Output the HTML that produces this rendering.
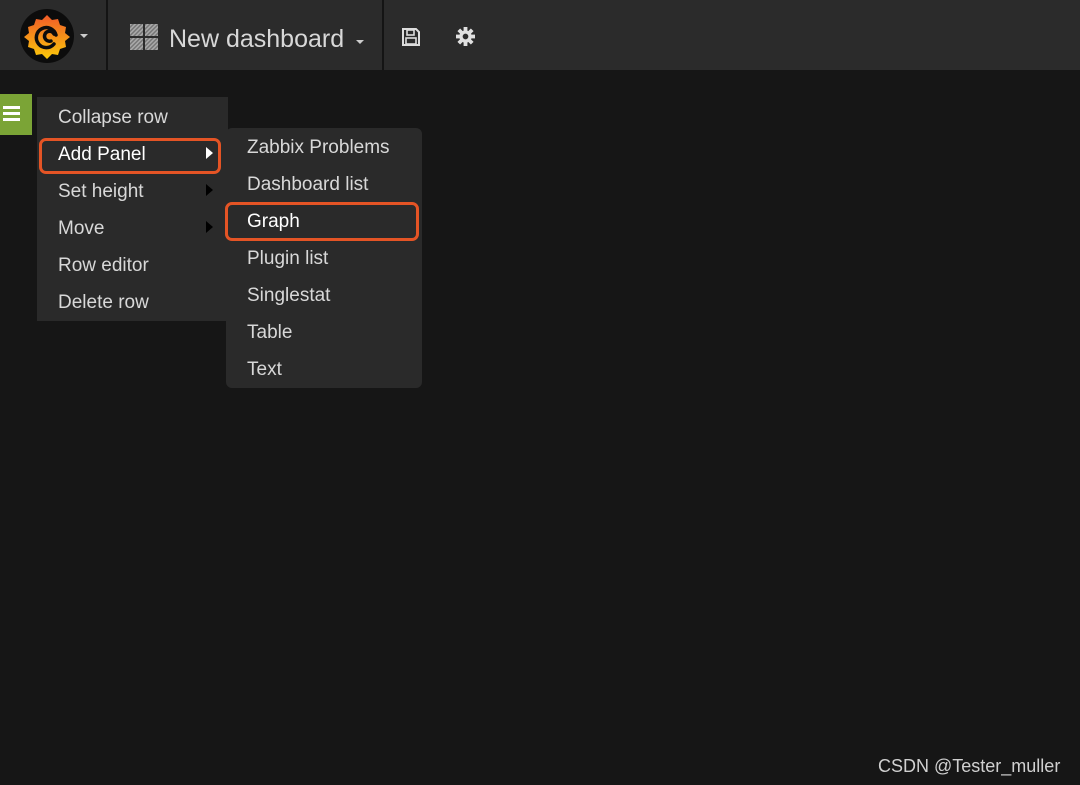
<!DOCTYPE html>
<html><head><style>
*{margin:0;padding:0;box-sizing:border-box}
body{width:1080px;height:785px;background:#161616;font-family:"Liberation Sans",Arial,sans-serif;position:relative;overflow:hidden;color:#d8d8d8}
.hdr{position:absolute;left:0;top:0;width:1080px;height:70px;background:#2b2b2b}
.div{position:absolute;top:0;width:2px;height:70px;background:#141414}
.abs{position:absolute}
.menu{position:absolute;background:#2a2a2a}
.it{position:absolute;font-size:19px;line-height:22px;white-space:nowrap}
.box{position:absolute;border:3px solid #e45425;border-radius:7px}
.tri{position:absolute;width:0;height:0;border-top:6px solid transparent;border-bottom:6px solid transparent;border-left:7px solid #000}
</style></head><body>
<div class="hdr"></div>
<div class="div" style="left:106px"></div>
<div class="div" style="left:382px"></div>
<svg class="abs" style="left:18px;top:8px" width="58" height="56" viewBox="0 0 58 56">
<circle cx="29" cy="28" r="27" fill="#0c0c0c"/>
<defs><linearGradient id="g" x1="0" y1="1" x2="0" y2="0"><stop offset="0" stop-color="#fbca0a"/><stop offset="1" stop-color="#f05a28"/></linearGradient></defs>
<path d="M29 7 l5 5 6-1 2 6 6 2-1 6 5 4-5 4 1 6-6 2-2 6-6-1-5 5-5-5-6 1-2-6-6-2 1-6-5-4 5-4-1-6 6-2 2-6 6 1z" fill="url(#g)"/>
<path d="M33 33 a5 5 0 1 1 3-7 M38 27 a10 10 0 1 0 -2 9" fill="none" stroke="#0c0c0c" stroke-width="3.5" stroke-linecap="round"/>
</svg>
<div class="abs" style="left:80px;top:34px;border-left:4px solid transparent;border-right:4px solid transparent;border-top:4px solid #ccc"></div>
<svg class="abs" style="left:130px;top:24px" width="29" height="27">
<defs><pattern id="h" width="3" height="3" patternUnits="userSpaceOnUse" patternTransform="rotate(45)"><rect width="1.5" height="3" fill="#aaa"/><rect x="1.5" width="1.5" height="3" fill="#777"/></pattern></defs>
<rect x="0" y="0" width="13" height="12" fill="url(#h)"/><rect x="15" y="0" width="13" height="12" fill="url(#h)"/>
<rect x="0" y="14" width="13" height="12" fill="url(#h)"/><rect x="15" y="14" width="13" height="12" fill="url(#h)"/>
</svg>
<div class="it" style="left:169px;top:25px;font-size:25px;line-height:28px;color:#d8d8d8">New dashboard</div>
<div class="abs" style="left:356px;top:40px;border-left:4px solid transparent;border-right:4px solid transparent;border-top:4px solid #ccc"></div>
<svg class="abs" style="left:401px;top:27px" width="20" height="20" viewBox="0 0 20 20"><path d="M2 2h13l3 3v13H2z" fill="none" stroke="#ddd" stroke-width="2"/><rect x="6" y="3" width="7" height="5" fill="none" stroke="#ddd" stroke-width="1.6"/><rect x="5" y="11" width="10" height="6" fill="none" stroke="#ddd" stroke-width="1.6"/></svg>
<svg class="abs" style="left:456px;top:27px" width="19" height="19" viewBox="0 0 20 20"><g fill="#e0e0e0"><circle cx="10" cy="10" r="6.5"/><g><rect x="8" y="0" width="4" height="20"/><rect x="0" y="8" width="20" height="4"/><rect x="8" y="0" width="4" height="20" transform="rotate(45 10 10)"/><rect x="8" y="0" width="4" height="20" transform="rotate(-45 10 10)"/></g></g><circle cx="10" cy="10" r="3" fill="#2b2b2b"/></svg>

<div class="abs" style="left:0;top:94px;width:32px;height:41px;background:#7ba436"></div>
<div class="abs" style="left:3px;top:106px;width:17px;height:3px;background:#fff;box-shadow:0 6px 0 #fff,0 12px 0 #fff"></div>

<div class="menu" style="left:37px;top:97px;width:191px;height:224px"></div>
<div class="menu" style="left:226px;top:128px;width:196px;height:260px;border-radius:6px"></div>

<div class="it" style="left:58px;top:107px">Collapse row</div>
<div class="it" style="left:58px;top:144px;color:#fff">Add Panel</div>
<div class="it" style="left:58px;top:181px">Set height</div>
<div class="it" style="left:58px;top:218px">Move</div>
<div class="it" style="left:58px;top:255px">Row editor</div>
<div class="it" style="left:58px;top:292px">Delete row</div>
<div class="box" style="left:39px;top:138px;width:182px;height:36px"></div>
<div class="tri" style="left:206px;top:147px;border-left-color:#fff"></div>
<div class="tri" style="left:206px;top:184px"></div>
<div class="tri" style="left:206px;top:221px"></div>

<div class="it" style="left:247px;top:137px">Zabbix Problems</div>
<div class="it" style="left:247px;top:174px">Dashboard list</div>
<div class="it" style="left:247px;top:211px;color:#fff">Graph</div>
<div class="it" style="left:247px;top:248px">Plugin list</div>
<div class="it" style="left:247px;top:285px">Singlestat</div>
<div class="it" style="left:247px;top:322px">Table</div>
<div class="it" style="left:247px;top:359px">Text</div>
<div class="box" style="left:225px;top:202px;width:194px;height:39px"></div>

<div class="it" style="left:878px;top:755px;font-size:18px;color:#d0d0d0">CSDN @Tester_muller</div>
</body></html>
